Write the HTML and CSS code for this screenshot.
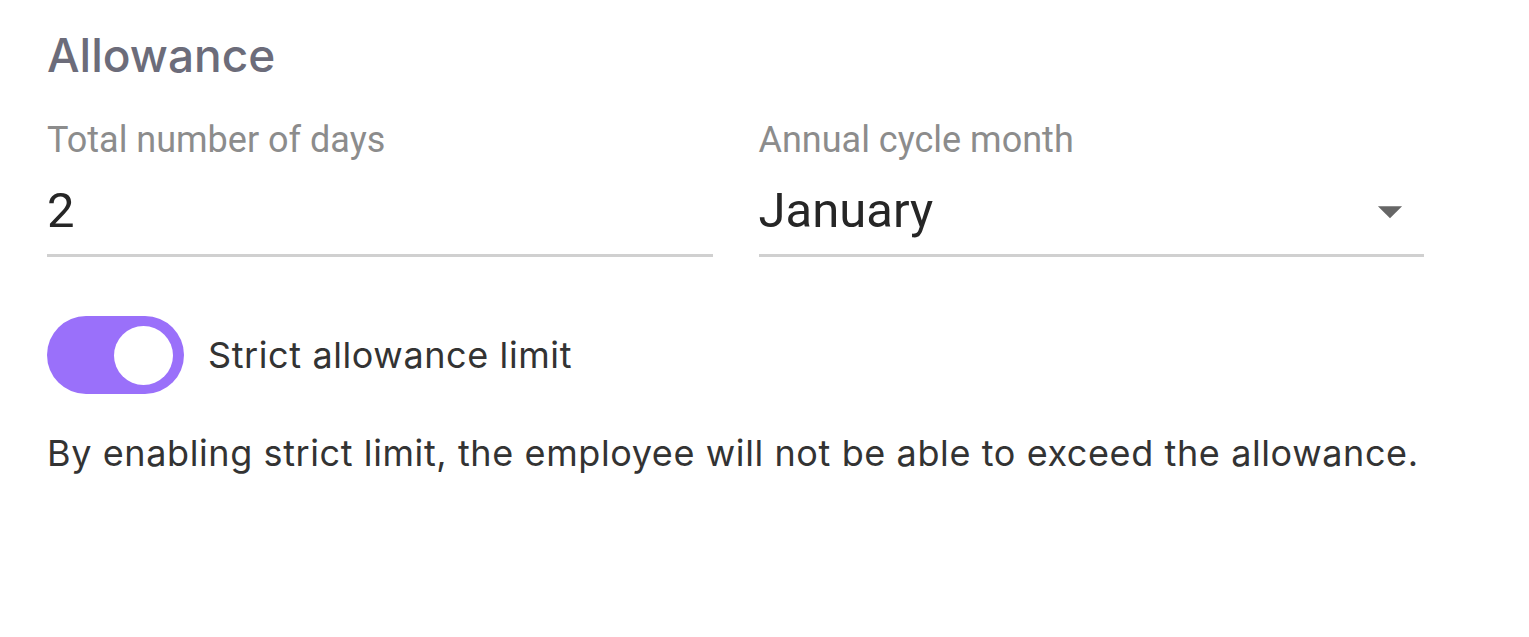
FILE: index.html
```html
<html>
<head>
<meta charset="UTF-8">
<title>Allowance</title>
<link rel="stylesheet" href="styles.css">
</head>
<body>

<div class="section">
    <h2 class="title">Allowance</h2>

    <div class="fields">
        <div class="field">
            <label class="label">Total number of days</label>
            <div class="input">
                <span class="value">2</span>
            </div>
        </div>
        <div class="field">
            <label class="label">Annual cycle month</label>
            <div class="input">
                <span class="value">January</span>
                <svg class="arrow" viewBox="0 0 24 24"><path d="M7 10l5 5 5-5z"></path></svg>
            </div>
        </div>
    </div>

    <div class="switch-row">
        <div class="switch on">
            <div class="knob"></div>
        </div>
        <span class="switch-label">Strict allowance limit</span>
    </div>

    <p class="hint">By enabling strict limit, the employee will not be able to exceed the allowance.</p>
</div>

</body>
</html>
```

FILE: styles.css
```css
body {
    margin: 0;
    background: #fff;
    font-family: "Inter", "Liberation Sans", sans-serif;
}

.section {
    padding: 27px 0 0 47px;
    width: 1377px;
}

.title {
    margin: 0;
    font-size: 46px;
    font-weight: 500;
    color: #6c6c7a;
    line-height: 56px;
}

.fields {
    display: flex;
    gap: 46px;
    margin-top: 36px;
}

.field {
    flex: 1;
}

.label {
    display: block;
    font-family: "Roboto", sans-serif;
    font-size: 36px;
    color: #8c8c8c;
    line-height: 42px;
}

.input {
    display: flex;
    align-items: center;
    justify-content: space-between;
    padding: 21px 0 14px;
    border-bottom: 3px solid #d0d0d0;
}

.value {
    font-family: "Roboto", sans-serif;
    font-size: 49px;
    line-height: 58px;
    color: #262626;
}

.arrow {
    width: 58px;
    height: 58px;
    fill: #666;
    margin-right: 5px;
}

.switch-row {
    display: flex;
    align-items: center;
    gap: 24px;
    margin-top: 59px;
}

.switch {
    width: 137px;
    height: 78px;
    border-radius: 39px;
    background: #9a70fa;
    display: flex;
    align-items: center;
}

.switch.on {
    justify-content: flex-end;
}

.knob {
    width: 59px;
    height: 59px;
    border-radius: 50%;
    background: #fff;
    margin-right: 11px;
}

.switch-label {
    font-size: 36px;
    letter-spacing: 0.6px;
    color: #333;
}

.hint {
    margin: 37px 0 0;
    font-size: 36px;
    line-height: 44px;
    letter-spacing: 0.6px;
    color: #333;
}
```
